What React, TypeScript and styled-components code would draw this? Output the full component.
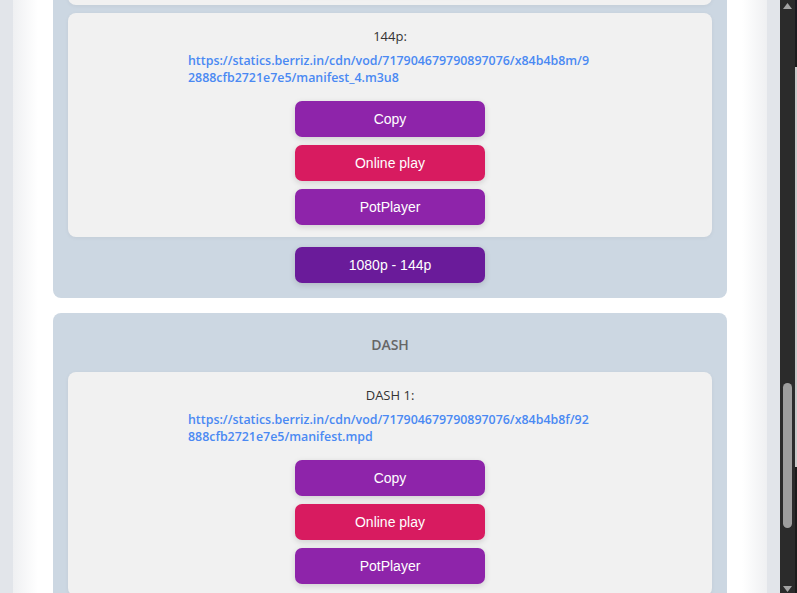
import React, { useLayoutEffect, useRef } from "react";
import styled, { createGlobalStyle } from "styled-components";

const Global = createGlobalStyle`
  html, body { margin: 0; padding: 0; overflow: hidden; }
  body { font-family: "Open Sans", "Noto Sans", sans-serif; }
  * { box-sizing: border-box; }
`;

const Page = styled.div`
  display: flex;
  height: 100vh;
  background: #e2e5ea;
`;

const Viewport = styled.div`
  flex: 1;
  overflow: hidden;
  padding: 0 13px;
`;

const Wrapper = styled.div`
  background: linear-gradient(
    to right,
    #eff0f2 0,
    #ffffff 25px,
    #ffffff calc(100% - 25px),
    #eff0f2 100%
  );
  padding: 20px 40px 40px;
  display: flex;
  flex-direction: column;
  gap: 15px;
`;

const Title = styled.h1`
  margin: 10px 0 10px;
  text-align: center;
  font-size: 22px;
  color: #333;
`;

const Section = styled.section`
  background: #ccd7e2;
  border-radius: 8px;
  padding: 15px;
  display: flex;
  flex-direction: column;
  align-items: stretch;
`;

const SectionHeading = styled.h3`
  margin: 7px 0 17px;
  font-size: 14px;
  line-height: 20px;
  font-weight: 600;
  color: #666;
  text-align: center;
`;

const CardList = styled.div`
  display: flex;
  flex-direction: column;
  gap: 8px;
`;

const Card = styled.div`
  background: #f1f1f1;
  border-radius: 8px;
  padding: 15px 15px 12px;
  text-align: center;
  box-shadow: 0 1px 4px rgba(0, 0, 0, 0.05);
`;

const Label = styled.div`
  font-size: 13px;
  line-height: 16px;
  color: #333;
  margin-bottom: 8px;
`;

const Link = styled.a`
  display: block;
  max-width: 404px;
  margin: 0 auto;
  text-align: left;
  word-break: break-all;
  font-size: 12.4px;
  font-weight: 600;
  line-height: 17px;
  color: #4a89f3;
  text-decoration: none;
`;

const ButtonStack = styled.div`
  display: flex;
  flex-direction: column;
  align-items: center;
  gap: 8px;
  margin-top: 15px;
`;

const Button = styled.button<{ $tone: "purple" | "pink" | "deep" }>`
  width: 190px;
  height: 36px;
  border: none;
  border-radius: 7px;
  font-family: "Liberation Sans", Arial, sans-serif;
  font-size: 14px;
  color: #fff;
  cursor: pointer;
  box-shadow: 0 2px 6px rgba(0, 0, 0, 0.14);
  background: ${(p) =>
    p.$tone === "pink" ? "#d81b60" : p.$tone === "deep" ? "#6a1b9a" : "#8e24aa"};
`;

const RangeRow = styled.div`
  display: flex;
  justify-content: center;
  margin-top: 10px;
`;

const ScrollBar = styled.div`
  width: 15px;
  background: #2b2b2b;
  display: flex;
  flex-direction: column;
  align-items: center;
  padding: 3px 0 1px;
`;

const Track = styled.div`
  flex: 1;
  display: flex;
  flex-direction: column;
  align-items: center;
`;

const Thumb = styled.div<{ $top: number; $height: number }>`
  width: 9px;
  margin-top: ${(p) => p.$top}px;
  height: ${(p) => p.$height}px;
  border-radius: 5px;
  background: #9e9e9e;
`;

const Strip = styled.div`
  width: 2px;
  background: linear-gradient(
    to bottom,
    #1c1a22 0,
    #1c1c1c 67px,
    #c9c9c9 67px,
    #c9c9c9 467px,
    #1c1c1c 467px
  );
`;

const Arrow = ({ down }: { down?: boolean }) => (
  <svg width="9" height="6" viewBox="0 0 9 6">
    <polygon points={down ? "0,0 9,0 4.5,6" : "4.5,0 9,6 0,6"} fill="#a3a3a3" />
  </svg>
);

const BASE = "https://statics.berriz.in/cdn/vod/717904679790897076/";

const hls = [
  { q: "1080p", n: 0 },
  { q: "720p", n: 1 },
  { q: "480p", n: 2 },
  { q: "360p", n: 3 },
  { q: "144p", n: 4 },
];

const EntryCard = React.forwardRef<HTMLDivElement, { label: string; url: string }>(
  ({ label, url }, ref) => (
    <Card ref={ref}>
      <Label>{label}</Label>
      <Link href={url}>{url}</Link>
      <ButtonStack>
        <Button $tone="purple">Copy</Button>
        <Button $tone="pink">Online play</Button>
        <Button $tone="purple">PotPlayer</Button>
      </ButtonStack>
    </Card>
  )
);

export default function App() {
  const vpRef = useRef<HTMLDivElement>(null);
  const targetRef = useRef<HTMLDivElement>(null);

  useLayoutEffect(() => {
    const vp = vpRef.current;
    const t = targetRef.current;
    if (!vp || !t) return;
    const delta = t.getBoundingClientRect().top - vp.getBoundingClientRect().top - 13;
    vp.scrollTop += delta;
  }, []);

  return (
    <>
      <Global />
      <Page>
        <Viewport ref={vpRef}>
          <Wrapper>
            <Title>Berriz</Title>
            <Section>
              <SectionHeading>HLS</SectionHeading>
              <CardList>
                {hls.map((h) => (
                  <EntryCard
                    key={h.q}
                    ref={h.q === "144p" ? targetRef : undefined}
                    label={`${h.q}:`}
                    url={`${BASE}x84b4b8m/92888cfb2721e7e5/manifest_${h.n}.m3u8`}
                  />
                ))}
              </CardList>
              <RangeRow>
                <Button $tone="deep">1080p - 144p</Button>
              </RangeRow>
            </Section>
            <Section>
              <SectionHeading>DASH</SectionHeading>
              <CardList>
                <EntryCard
                  label="DASH 1:"
                  url={`${BASE}x84b4b8f/92888cfb2721e7e5/manifest.mpd`}
                />
              </CardList>
            </Section>
          </Wrapper>
        </Viewport>
        <ScrollBar>
          <Arrow />
          <Track>
            <Thumb $top={374} $height={145} />
          </Track>
          <Arrow down />
        </ScrollBar>
        <Strip />
      </Page>
    </>
  );
}
